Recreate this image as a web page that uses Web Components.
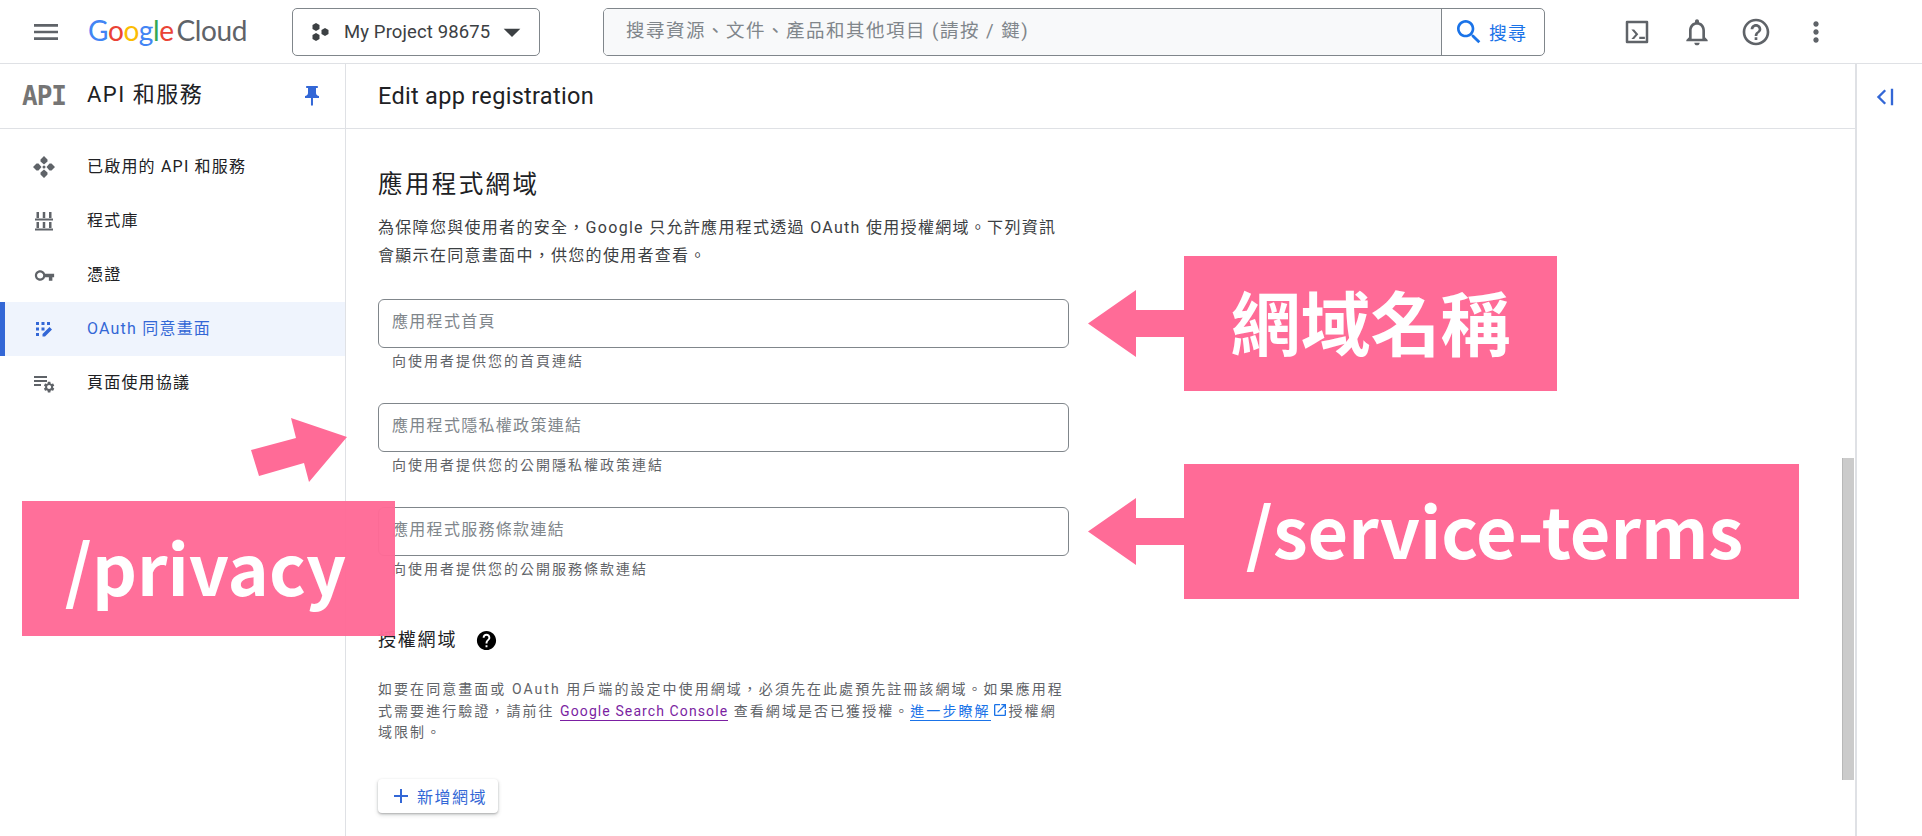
<!DOCTYPE html>
<html lang="zh-Hant">
<head>
<meta charset="utf-8">
<title>Edit app registration</title>
<style>
  html, body { margin: 0; height: 100%; overflow: hidden; background: #fff; }
  body { font-family: Roboto, "Noto Sans CJK TC", sans-serif; color: #202124; }
</style>
</head>
<body>
<console-page></console-page>

<script>
const CJK = 'Roboto, "Noto Sans CJK TC", sans-serif';
const COMMA = '\uFF0C';
const GEAR = 'M19.14 12.94c.04-.3.06-.61.06-.94 0-.32-.02-.64-.07-.94l2.03-1.58c.18-.14.23-.41.12-.61l-1.92-3.32c-.12-.22-.37-.29-.59-.22l-2.39.96c-.5-.38-1.03-.7-1.62-.94l-.36-2.54c-.04-.24-.24-.41-.48-.41h-3.84c-.24 0-.43.17-.47.41l-.36 2.54c-.59.24-1.13.57-1.62.94l-2.39-.96c-.22-.08-.47 0-.59.22L2.74 8.87c-.12.21-.08.47.12.61l2.03 1.58c-.05.3-.09.63-.09.94s.02.64.07.94l-2.03 1.58c-.18.14-.23.41-.12.61l1.92 3.32c.12.22.37.29.59.22l2.39-.96c.5.38 1.03.7 1.62.94l.36 2.54c.05.24.24.41.48.41h3.84c.24 0 .44-.17.47-.41l.36-2.54c.59-.24 1.13-.56 1.62-.94l2.39.96c.22.08.47 0 .59-.22l1.92-3.32c.12-.22.07-.47-.12-.61l-2.01-1.58zM12 15.6c-1.98 0-3.6-1.62-3.6-3.6s1.62-3.6 3.6-3.6 3.6 1.62 3.6 3.6-1.62 3.6-3.6 3.6z';

const icons = {
  menu: 'M3 18h18v-2H3v2zm0-5h18v-2H3v2zm0-7v2h18V6H3z',
  drop: 'M7 10l5 5 5-5z',
  search: 'M15.5 14h-.79l-.28-.27C15.41 12.59 16 11.11 16 9.5 16 5.91 13.09 3 9.5 3S3 5.91 3 9.5 5.91 16 9.5 16c1.61 0 3.09-.59 4.23-1.57l.27.28v.79l5 4.99L20.49 19l-4.99-5zm-6 0C7.01 14 5 11.99 5 9.5S7.01 5 9.5 5 14 7.01 14 9.5 11.99 14 9.5 14z',
  terminal: '<path fill-rule="evenodd" d="M4 3h16a1 1 0 0 1 1 1v16a1 1 0 0 1-1 1H4a1 1 0 0 1-1-1V4a1 1 0 0 1 1-1zm1 2v14h14V5zM7.5 10h2.200l3.300 3.800-3.300 3.800H7.500l3.300-3.800zM13.800 15.800h4.500v1.800h-4.500z"/>',
  bell: 'M12 22c1.1 0 2-.9 2-2h-4c0 1.100.9 2 2 2zm6-6v-5c0-3.070-1.630-5.640-4.500-6.320V4c0-.830-.670-1.500-1.500-1.500s-1.500.670-1.500 1.500v.680C7.640 5.360 6 7.920 6 11v5l-2 2v1h16v-1l-2-2zm-2 1H8v-6c0-2.480 1.510-4.500 4-4.500s4 2.020 4 4.500v6z',
  help: 'M11 18h2v-2h-2v2zm1-16C6.480 2 2 6.480 2 12s4.480 10 10 10 10-4.480 10-10S17.520 2 12 2zm0 18c-4.410 0-8-3.590-8-8s3.590-8 8-8 8 3.590 8 8-3.590 8-8 8zm0-14c-2.210 0-4 1.790-4 4h2c0-1.100.9-2 2-2s2 .9 2 2c0 2-3 1.750-3 5h2c0-2.250 3-2.500 3-5 0-2.210-1.790-4-4-4z',
  helpFill: 'M12 2C6.480 2 2 6.480 2 12s4.480 10 10 10 10-4.480 10-10S17.520 2 12 2zm1 17h-2v-2h2v2zm2.070-7.750l-.9.920C13.450 12.900 13 13.500 13 15h-2v-.5c0-1.100.450-2.100 1.170-2.830l1.240-1.260c.370-.360.590-.860.590-1.410 0-1.100-.9-2-2-2s-2 .9-2 2H8c0-2.210 1.790-4 4-4s4 1.790 4 4c0 .880-.360 1.680-.930 2.250z',
  dots: 'M12 8c1.100 0 2-.9 2-2s-.9-2-2-2-2 .9-2 2 .9 2 2 2zm0 2c-1.100 0-2 .9-2 2s.9 2 2 2 2-.9 2-2-.9-2-2-2zm0 6c-1.100 0-2 .9-2 2s.9 2 2 2 2-.9 2-2-.9-2-2-2z',
  pin: 'M16 9V4h1c.550 0 1-.450 1-1s-.450-1-1-1H7c-.550 0-1 .450-1 1s.450 1 1 1h1v5c0 1.660-1.340 3-3 3v2h5.970v7l1 1 1-1v-7H19v-2c-1.660 0-3-1.340-3-3z',
  collapse: 'M11.500 5.500 5 12l6.500 6.500 1.400-1.400L7.800 12l5.100-5.100zM17 5h2v14h-2z',
  openNew: 'M19 19H5V5h7V3H5c-1.110 0-2 .9-2 2v14c0 1.100.890 2 2 2h14c1.100 0 2-.9 2-2v-7h-2v7zM14 3v2h3.590l-9.830 9.830 1.410 1.410L19 6.410V10h2V3h-7z',
  add: 'M19 13h-6v6h-2v-6H5v-2h6V5h2v6h6v2z',
  apis: 'M12 1 8.500 4.500v2l3.500 3 3.500-3v-2zM12 23l-3.500-3.500v-2l3.500-3 3.500 3v2zM1 12l3.500-3.500h2l3 3.500-3 3.500h-2zM23 12l-3.500-3.500h-2l-3 3.500 3 3.500h2zM12 10.500a1.500 1.500 0 1 0 0 3 1.500 1.500 0 0 0 0-3z',
  library: 'M4.500 3H7v6H4.500zm6.250 0h2.500v6h-2.500zM17 3h2.500v6H17zM3 9.500h18v2H3zM4.500 13H7v6H4.500zm6.250 0h2.500v6h-2.500zM17 13h2.500v6H17zM3 19.500h18v2H3z',
  key: 'M12.650 10C11.830 7.670 9.610 6 7 6c-3.310 0-6 2.690-6 6s2.690 6 6 6c2.610 0 4.830-1.670 5.650-4H17v4h4v-4h2v-4H12.650zM7 15.500c-1.930 0-3.500-1.570-3.500-3.500S5.070 8.500 7 8.500s3.500 1.570 3.500 3.500-1.570 3.500-3.500 3.500z',
  consent: 'M4 5h3v3H4zm5.500 0h3v3h-3zM15 5h3v3h-3zM4 10.500h3v3H4zm5.500 0h3v3h-3zM4 16h3v3H4zm6.500 3.500V17l7-7 2.500 2.500-7 7z',
  usage: `<path d="M2 5h13v2H2zm0 4h13v2H2zm0 4h7v2H2z"/><path transform="translate(10.500 9.500) scale(.55)" d="${GEAR}"/>`
};

function svgIcon(name, size, fill, extra = '') {
  const body = icons[name].startsWith('<') ? icons[name] : `<path d="${icons[name]}"/>`;
  return `<svg width="${size}" height="${size}" viewBox="0 0 24 24" fill="${fill}" style="display:block;flex:none;${extra}">${body}</svg>`;
}

class TopBar extends HTMLElement {
  constructor() {
    super();
    this.attachShadow({ mode: 'open' }).innerHTML = `
      <style>
        :host { display: flex; align-items: center; height: 63px; border-bottom: 1px solid #dfe1e5; box-sizing: content-box; font-family: ${CJK}; position: relative; }
        .burger { margin-left: 30px; width: 33px; }
        .logo { margin: -3px 0 0 25px; font: 400 28px/1 Lato, sans-serif; width: 204px; letter-spacing: -.4px; white-space: nowrap; }
        .logo .c { color: #5f6368; margin-left: 3px; }
        .project { display: flex; align-items: center; width: 248px; height: 48px; box-sizing: border-box; border: 1px solid #80868b; border-radius: 5px; padding-left: 15px; font-size: 18.500px; color: #3c4043; letter-spacing: .12px; white-space: nowrap; }
        .hex { margin-right: 12px; flex: none; }
        .search { display: flex; margin-left: 63px; width: 942px; height: 48px; box-sizing: border-box; border: 1px solid #80868b; border-radius: 5px; overflow: hidden; }
        .box { flex: 1; background: #f8f9fa; color: #80868b; font-size: 18.500px; padding-left: 22px; line-height: 44px; letter-spacing: 1.500px; white-space: nowrap; }
        .go { width: 103px; border-left: 1px solid #80868b; display: flex; align-items: center; gap: 4px; padding-left: 11px; box-sizing: border-box; color: #1a73e8; font-size: 18px; letter-spacing: 1px; }
        .tools { display: flex; margin-left: 76px; gap: 27.500px; }
        .tools span { width: 32px; height: 32px; display: flex; align-items: center; justify-content: center; }
      </style>
      <span class="burger">${svgIcon('menu', 32, '#5f6368')}</span>
      <div class="logo"><span style="color:#4285f4">G</span><span style="color:#ea4335">o</span><span style="color:#fbbc04">o</span><span style="color:#4285f4">g</span><span style="color:#34a853">l</span><span style="color:#ea4335">e</span><span class="c">Cloud</span></div>
      <div class="project">
        <svg class="hex" viewBox="0 0 24 24" width="24" height="24" fill="#3c4043"><path d="M8 3l3.500 2v4L8 11 4.500 9V5zM17 8l3.500 2v4L17 16l-3.500-2v-4zM8 13l3.500 2v4L8 21l-3.500-2v-4z"/></svg>
        <span>My Project 98675</span>
        ${svgIcon('drop', 40, '#3c4043', 'margin-left:2px')}
      </div>
      <div class="search">
        <div class="box">搜尋資源、文件、產品和其他項目 (請按 / 鍵)</div>
        <div class="go">${svgIcon('search', 32, '#1a73e8')}<span>搜尋</span></div>
      </div>
      <div class="tools">
        <span>${svgIcon('terminal', 30, '#5f6368')}</span>
        <span>${svgIcon('bell', 32, '#5f6368')}</span>
        <span>${svgIcon('help', 32, '#5f6368')}</span>
        <span>${svgIcon('dots', 32, '#5f6368')}</span>
      </div>`;
  }
}

class NavItem extends HTMLElement {
  constructor() {
    super();
    const active = this.hasAttribute('active');
    const color = active ? '#3367d6' : '#5f6368';
    const size = this.getAttribute('size') || 24;
    this.attachShadow({ mode: 'open' }).innerHTML = `
      <style>
        :host { display: flex; align-items: center; height: 54px; font-size: 16px; letter-spacing: 1.200px; color: #202124; white-space: nowrap; box-sizing: border-box; border-left: 5px solid transparent; }
        :host([active]) { background: #eff4fd; border-left-color: #3367d6; color: #3367d6; }
        .ic { width: 24px; margin-left: 27px; margin-right: 31px; display: flex; justify-content: center; }
        .txt { margin-bottom: 5px; }
      </style>
      <span class="ic">${svgIcon(this.getAttribute('icon'), size, color)}</span>
      <span class="txt"><slot></slot></span>`;
  }
}

class SideNav extends HTMLElement {
  constructor() {
    super();
    this.attachShadow({ mode: 'open' }).innerHTML = `
      <style>
        :host { display: block; width: 345px; flex: none; border-right: 1px solid #dfe1e5; font-family: ${CJK}; }
        header { display: flex; align-items: center; height: 65px; border-bottom: 1px solid #dfe1e5; box-sizing: border-box; position: relative; }
        .api { margin-left: 22px; width: 44px; font: 700 26px/1 "DejaVu Sans Mono", monospace; color: #757575; letter-spacing: -1px; }
        .name { margin-left: 21px; font-size: 22px; line-height: 30px; margin-top: -2px; letter-spacing: 1.500px; color: #202124; flex: 1; white-space: nowrap; }
        .pin { margin-right: 21px; }
        nav { padding-top: 11px; }
      </style>
      <header>
        <span class="api">API</span>
        <span class="name">API 和服務</span>
        <span class="pin">${svgIcon('pin', 24, '#3367d6')}</span>
      </header>
      <nav><slot></slot></nav>`;
  }
}

class DomainField extends HTMLElement {
  constructor() {
    super();
    this.attachShadow({ mode: 'open' }).innerHTML = `
      <style>
        :host { display: block; height: 104px; }
        .box { width: 691px; height: 49px; box-sizing: border-box; border: 1px solid #80868b; border-radius: 6px; padding-left: 13px; line-height: 43px; font-size: 16px; letter-spacing: 1.300px; color: #80868b; }
        .hint { padding-left: 14px; margin-top: 3px; font-size: 14px; line-height: 20px; letter-spacing: 2px; color: #5f6368; white-space: nowrap; }
      </style>
      <div class="box">${this.getAttribute('label')}</div>
      <div class="hint"><slot></slot></div>`;
  }
}

class DomainForm extends HTMLElement {
  constructor() {
    super();
    this.attachShadow({ mode: 'open' }).innerHTML = `
      <style>
        :host { display: block; flex: 1; min-width: 0; font-family: ${CJK}; position: relative; }
        header { display: flex; align-items: center; height: 65px; border-bottom: 1px solid #dfe1e5; box-sizing: border-box; padding-left: 32px; font: 400 23.500px Roboto, sans-serif; letter-spacing: .3px; color: #202124; }
        .scroll { padding: 36px 0 0 32px; position: relative; }
        h2 { margin: 0; font-size: 24.500px; font-weight: 400; line-height: 40px; letter-spacing: 2.400px; color: #202124; }
        p.lead { margin: 9px 0 0; font-size: 16px; line-height: 28px; letter-spacing: 1.300px; color: #3c4043; white-space: nowrap; }
        .fields { margin-top: 29px; }
        h3 { margin: 15px 0 0; display: flex; align-items: center; gap: 18px; font-size: 18px; font-weight: 400; line-height: 28px; letter-spacing: 1.800px; color: #202124; }
        p.note { margin: 25px 0 0; font-size: 14px; line-height: 21.500px; letter-spacing: 2.050px; color: #5f6368; white-space: nowrap; }
        a { text-decoration: none; border-bottom: 1px solid; padding-bottom: 1px; letter-spacing: 1.100px; }
        .visited { color: #7b1fa2; }
        .blue { color: #1a73e8; letter-spacing: 2.050px; }
        .ext { display: inline-block; vertical-align: -2px; margin: 0 1px; }
        .add { display: inline-flex; align-items: center; margin-top: 35px; height: 34px; width: 120px; box-sizing: border-box; border-radius: 4px; background: #fff; box-shadow: 0 1px 2px rgba(60,64,67,.3), 0 2px 4px rgba(60,64,67,.2); color: #3367d6; font-size: 16px; letter-spacing: 1.500px; padding-left: 11px; gap: 4px; }
        .bar { position: absolute; right: 1px; top: 329px; width: 12px; height: 322px; background: #cbcbcb; border-left: 1px solid #b8b8b8; box-sizing: border-box; }
      </style>
      <header>Edit app registration</header>
      <div class="scroll">
        <h2>應用程式網域</h2>
        <p class="lead">為保障您與使用者的安全${COMMA}Google 只允許應用程式透過 OAuth 使用授權網域。下列資訊<br>會顯示在同意畫面中${COMMA}供您的使用者查看。</p>
        <div class="fields"><slot></slot></div>
        <h3>授權網域 ${svgIcon('helpFill', 23, '#000')}</h3>
        <p class="note">如要在同意畫面或 OAuth 用戶端的設定中使用網域${COMMA}必須先在此處預先註冊該網域。如果應用程<br>式需要進行驗證${COMMA}請前往 <a class="visited">Google Search Console</a> 查看網域是否已獲授權。<a class="blue">進一步瞭解</a><span class="ext">${svgIcon('openNew', 16, '#1a73e8')}</span>授權網<br>域限制。</p>
        <div class="add">${svgIcon('add', 24, '#3367d6')}<span>新增網域</span></div>
        <div class="bar"></div>
      </div>`;
  }
}

class RightRail extends HTMLElement {
  constructor() {
    super();
    this.attachShadow({ mode: 'open' }).innerHTML = `
      <style>
        :host { display: block; width: 67px; flex: none; border-left: 2px solid #dfe1e5; box-sizing: border-box; }
        div { height: 65px; display: flex; align-items: center; padding-left: 14px; }
      </style>
      <div>${svgIcon('collapse', 28, '#3367d6')}</div>`;
  }
}

class CalloutLabel extends HTMLElement {
  constructor() {
    super();
    this.attachShadow({ mode: 'open' }).innerHTML = `
      <style>
        :host { position: absolute; display: flex; align-items: center; justify-content: center; height: 135px; padding-bottom: 6px; background: #ff6b97; color: #fff; font: 700 70px/1 "Noto Sans CJK TC", sans-serif; white-space: nowrap; box-sizing: border-box; }
      </style>
      <slot></slot>`;
  }
}

class ConsolePage extends HTMLElement {
  constructor() {
    super();
    this.attachShadow({ mode: 'open' }).innerHTML = `
      <style>
        :host { display: block; position: relative; width: 1922px; height: 836px; overflow: hidden; background: #fff; }
        .main { display: flex; height: 772px; }
        svg.arrows { position: absolute; left: 0; top: 0; pointer-events: none; }
      </style>
      <top-bar></top-bar>
      <div class="main">
        <side-nav>
          <nav-item icon="apis">已啟用的 API 和服務</nav-item>
          <nav-item icon="library">程式庫</nav-item>
          <nav-item icon="key" size="21">憑證</nav-item>
          <nav-item icon="consent" active>OAuth 同意畫面</nav-item>
          <nav-item icon="usage">頁面使用協議</nav-item>
        </side-nav>
        <domain-form>
          <domain-field label="應用程式首頁">向使用者提供您的首頁連結</domain-field>
          <domain-field label="應用程式隱私權政策連結">向使用者提供您的公開隱私權政策連結</domain-field>
          <domain-field label="應用程式服務條款連結">向使用者提供您的公開服務條款連結</domain-field>
        </domain-form>
        <right-rail></right-rail>
      </div>
      <svg class="arrows" width="1922" height="836" fill="#ff6b97">
        <polygon points="1184,310 1136,310 1136,290 1088,323.500 1136,357 1136,337 1184,337"/>
        <polygon points="1184,518 1136,518 1136,498 1088,531.500 1136,565 1136,545 1184,545"/>
        <polygon points="251,450 296,438 291,418 347,437 309,482 304,463 259,476"/>
      </svg>
      <callout-label style="left:1184px;top:256px;width:373px">網域名稱</callout-label>
      <callout-label style="left:1184px;top:464px;width:615px;padding-left:6px">/service-terms</callout-label>
      <callout-label style="left:22px;top:501px;width:373px;padding-right:6px;opacity:.97">/privacy</callout-label>`;
  }
}

customElements.define('top-bar', TopBar);
customElements.define('nav-item', NavItem);
customElements.define('side-nav', SideNav);
customElements.define('domain-field', DomainField);
customElements.define('domain-form', DomainForm);
customElements.define('right-rail', RightRail);
customElements.define('callout-label', CalloutLabel);
customElements.define('console-page', ConsolePage);
</script>
</body>
</html>
